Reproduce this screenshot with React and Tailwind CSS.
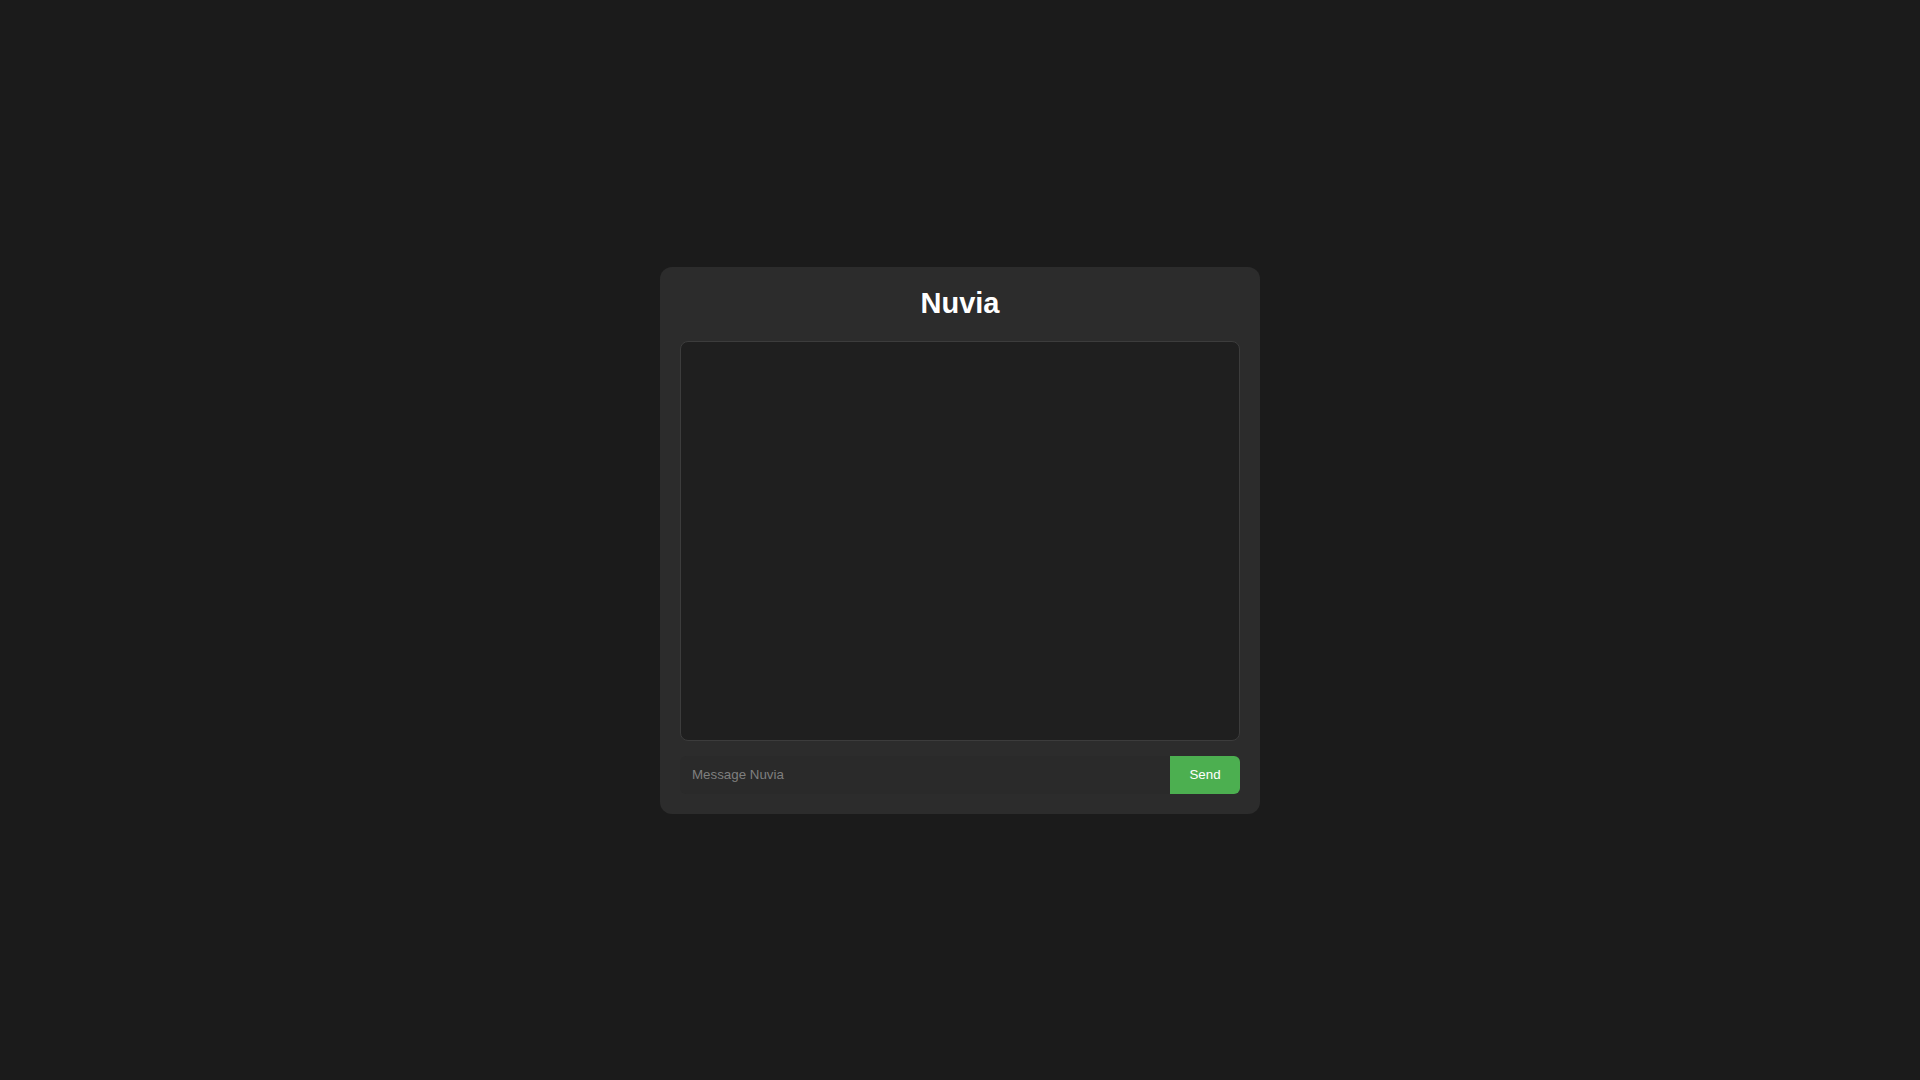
export default function App() {
  return (
    <div className="min-h-screen w-full bg-[#1b1b1b] flex items-center justify-center" style={{ fontFamily: '"Liberation Sans", Arial, sans-serif' }}>
      <div className="w-[600px] bg-[#2c2c2c] rounded-xl p-5 flex flex-col">
        <h1 className="text-[29px] font-bold text-white text-center leading-[normal] mb-[21px]">Nuvia</h1>
        <div className="h-[400px] bg-[#1f1f1f] border border-[#3c3c3c] rounded-lg"></div>
        <div className="mt-[15px] flex h-[38px]">
          <input
            type="text"
            placeholder="Message Nuvia"
            className="flex-1 bg-[#2a2a2a] text-[13.33px] text-white px-3 rounded-l-md outline-none placeholder:text-[#7f7f7f]"
          />
          <button className="w-[70px] bg-[#4caf50] text-white text-[13.33px] rounded-r-md">Send</button>
        </div>
      </div>
    </div>
  );
}
